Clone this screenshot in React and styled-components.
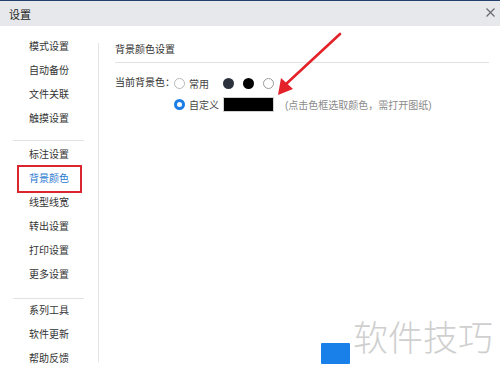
import React from 'react'
import styled, {createGlobalStyle} from 'styled-components'

const GlobalStyle = createGlobalStyle`
    html, body {
        margin: 0;
        padding: 0;
        background: #fff;
    }
    body {
        font-family: "Liberation Sans", "Noto Sans CJK SC", sans-serif;
        font-size: 10px;
        color: #333;
    }
`;

const groups = [
    {items: ['模式设置', '自动备份', '文件关联', '触摸设置'], sep: [9, 2]},
    {items: ['标注设置', '背景颜色', '线型线宽', '转出设置', '打印设置', '更多设置'], sep: [11, 0]},
    {items: ['系列工具', '软件更新', '帮助反馈']},
];

const App = () => {
    return(
        <Window>
            <GlobalStyle />
            <TitleBar>
                <Title>设置</Title>
                <Close>
                    <svg width="9" height="9" viewBox="0 0 9 9">
                        <path d="M0.5 0.5 L8.5 8.5 M8.5 0.5 L0.5 8.5" stroke="#6b6f75" strokeWidth="1.3" />
                    </svg>
                </Close>
            </TitleBar>

            <Body>
                <Sidebar>
                    {groups.map((g, i) => (
                        <React.Fragment key={i}>
                            {g.items.map(name =>
                                <Item key={name} $active={name === '背景颜色'}>{name}</Item>
                            )}
                            {g.sep && <Separator $top={g.sep[0]} $bottom={g.sep[1]} />}
                        </React.Fragment>
                    ))}
                </Sidebar>
                <Divider />

                <Content>
                    <Heading>背景颜色设置</Heading>
                    <Options>
                        <FieldLabel>当前背景色：</FieldLabel>
                        <OptionRow>
                            <Radio />
                            <OptionText>常用</OptionText>
                            <Swatches>
                                <Swatch $color="#2b323d" />
                                <Swatch $color="#000" />
                                <Swatch $color="#fff" $ring />
                            </Swatches>
                        </OptionRow>
                        <span />
                        <OptionRow>
                            <Radio $checked />
                            <OptionText>自定义</OptionText>
                            <ColorBox />
                            <Hint>(点击色框选取颜色，需打开图纸)</Hint>
                        </OptionRow>
                    </Options>
                </Content>
            </Body>

            <Arrow width="80" height="80" viewBox="0 0 80 80">
                <line x1="72" y1="4" x2="17" y2="55" stroke="#e3222a" strokeWidth="2.6" strokeLinecap="round" />
                <polygon points="10,65 13,48 25,59" fill="#e3222a" />
            </Arrow>

            <Watermark>
                <BlueMark />
                <MarkText>软件技巧</MarkText>
            </Watermark>
        </Window>
    )
};

const Window = styled.div`
    position: relative;
    width: 500px;
    height: 374px;
    overflow: hidden;
    background: #fff;
    display: flex;
    flex-direction: column;
`;

const TitleBar = styled.div`
    height: 25px;
    border-top: 1px solid #22426c;
    background: #e7e8eb;
    display: flex;
    align-items: center;
    justify-content: space-between;
    padding: 0 5px 0 9px;
`;

const Title = styled.div`
    font-size: 11px;
    color: #222;
    margin-top: 1px;
`;

const Close = styled.div`
    display: flex;
    align-items: center;
    margin-top: -2px;
`;

const Body = styled.div`
    flex: 1;
    display: flex;
`;

const Sidebar = styled.div`
    width: 98px;
    padding-top: 9px;
    display: flex;
    flex-direction: column;
`;

const Item = styled.div`
    width: 61px;
    height: 24px;
    line-height: 24px;
    margin: 0 auto;
    text-align: center;
    color: ${p => p.$active ? '#2b79cf' : '#333'};
    outline: ${p => p.$active ? '2px solid #d9262f' : 'none'};
`;

const Separator = styled.div`
    height: 1px;
    background: #e2e2e2;
    margin: ${p => p.$top}px 14px ${p => p.$bottom}px 13px;
`;

const Divider = styled.div`
    width: 1px;
    background: #e4e4e4;
    margin: 17px 0 12px;
`;

const Content = styled.div`
    flex: 1;
    padding: 14px 11px 0 16px;
`;

const Heading = styled.div`
    line-height: 20px;
    padding-bottom: 2px;
    border-bottom: 1px solid #e2e2e2;
    color: #333;
`;

const Options = styled.div`
    display: grid;
    grid-template-columns: 59px auto;
    row-gap: 1px;
    margin-top: 10px;
`;

const FieldLabel = styled.div`
    line-height: 20px;
    white-space: nowrap;
`;

const OptionRow = styled.div`
    height: 20px;
    display: flex;
    align-items: center;
    white-space: nowrap;
`;

const Radio = styled.span`
    box-sizing: border-box;
    flex: none;
    width: 11px;
    height: 11px;
    border-radius: 50%;
    background: #fff;
    border: ${p => p.$checked ? '3.5px solid #1a7ee6' : '1px solid #b8b8b8'};
`;

const OptionText = styled.span`
    margin-left: 4px;
    color: #444;
`;

const Swatches = styled.div`
    display: flex;
    gap: 9px;
    margin-left: 14px;
`;

const Swatch = styled.span`
    box-sizing: border-box;
    width: 11px;
    height: 11px;
    border-radius: 50%;
    background: ${p => p.$color};
    border: ${p => p.$ring ? '1px solid #999' : 'none'};
`;

const ColorBox = styled.span`
    flex: none;
    width: 49px;
    height: 13px;
    margin-left: 5px;
    background: #000;
    box-shadow: 0 0 0 1px #d0d0d0;
`;

const Hint = styled.span`
    margin-left: 12px;
    color: #8a8a8a;
`;

const Arrow = styled.svg`
    position: absolute;
    left: 268px;
    top: 30px;
`;

const Watermark = styled.div`
    position: absolute;
    left: 321px;
    top: 314px;
    display: flex;
    align-items: flex-start;
    gap: 3px;
`;

const BlueMark = styled.div`
    width: 29px;
    height: 21px;
    background: #1a80e9;
    border-radius: 1px;
    margin-top: 29px;
`;

const MarkText = styled.div`
    font-family: "Noto Sans CJK SC", sans-serif;
    font-weight: 300;
    font-size: 35px;
    line-height: 44px;
    color: #cfcfcf;
`;

export default App;
